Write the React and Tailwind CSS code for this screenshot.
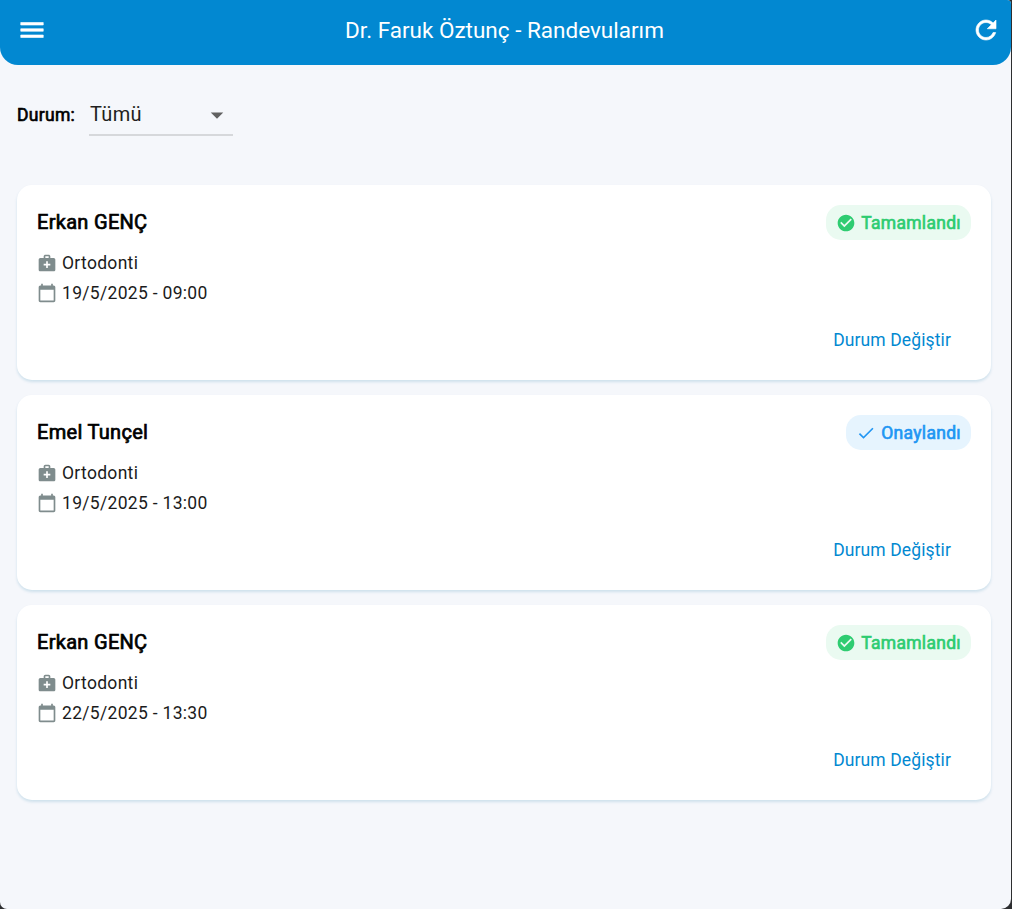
const icons = {
  menu: 'M3 18h18v-2H3v2zm0-5h18v-2H3v2zm0-7v2h18V6H3z',
  refresh:
    'M17.65 6.35C16.2 4.9 14.21 4 12 4c-4.42 0-7.99 3.58-7.99 8s3.57 8 7.99 8c3.73 0 6.84-2.55 7.73-6h-2.08c-.82 2.33-3.04 4-5.65 4-3.31 0-6-2.69-6-6s2.69-6 6-6c1.66 0 3.14.69 4.22 1.78L13 11h7V4l-2.35 2.35z',
  dropdown: 'M7 10l5 5 5-5z',
  medical:
    'M20 6h-4V4c0-1.1-.9-2-2-2h-4c-1.1 0-2 .9-2 2v2H4c-1.1 0-2 .9-2 2v12c0 1.1.9 2 2 2h16c1.1 0 2-.9 2-2V8c0-1.1-.9-2-2-2zM10 4h4v2h-4V4zm6 11h-3v3h-2v-3H8v-2h3v-3h2v3h3v2z',
  calendar:
    'M20 3h-1V1h-2v2H7V1H5v2H4c-1.1 0-2 .9-2 2v16c0 1.1.9 2 2 2h16c1.1 0 2-.9 2-2V5c0-1.1-.9-2-2-2zm0 18H4V8h16v13z',
  checkCircle:
    'M12 2C6.48 2 2 6.48 2 12s4.48 10 10 10 10-4.48 10-10S17.52 2 12 2zm-2 15l-5-5 1.41-1.41L10 14.17l7.59-7.59L19 8l-9 9z',
  check: 'M9 16.17L4.83 12l-1.42 1.41L9 19 21 7l-1.41-1.41z',
};

function Icon({ name, className }) {
  return (
    <svg viewBox="0 0 24 24" fill="currentColor" className={`shrink-0 ${className}`}>
      <path d={icons[name]} />
    </svg>
  );
}

const statuses = {
  done: { label: 'Tamamlandı', icon: 'checkCircle', style: 'bg-[#eafaf1] text-[#2ecc71]' },
  approved: { label: 'Onaylandı', icon: 'check', style: 'bg-[#e6f4fe] text-[#2196f3]' },
};

const appointments = [
  { name: 'Erkan GENÇ', date: '19/5/2025 - 09:00', status: 'done' },
  { name: 'Emel Tunçel', date: '19/5/2025 - 13:00', status: 'approved' },
  { name: 'Erkan GENÇ', date: '22/5/2025 - 13:30', status: 'done' },
];

function AppointmentCard({ name, date, status }) {
  const s = statuses[status];
  return (
    <article className="flex h-[195px] flex-col rounded-[15px] bg-white p-5 shadow-[0_2px_3px_rgba(2,110,160,0.16)]">
      <div className="flex h-[35px] items-center justify-between">
        <h2 className="pb-[2px] text-[20px] tracking-[0.3px] [-webkit-text-stroke:0.7px_currentColor]">{name}</h2>
        <span className={`flex h-[35px] items-center gap-[5px] rounded-[15px] px-[10px] ${s.style}`}>
          <Icon name={s.icon} className="size-5" />
          <span className="pt-[2px] text-[17.5px] tracking-[0.3px] [-webkit-text-stroke:0.65px_currentColor]">{s.label}</span>
        </span>
      </div>
      <div className="mt-[10px] flex flex-col gap-[5px] text-[17.5px] leading-[25px] tracking-[0.31px] text-[#1b1b1b]">
        <div className="flex h-[25px] items-center gap-[5px]">
          <Icon name="medical" className="size-5 text-[#7f8c8d]" />
          <span className="pt-[2px]">Ortodonti</span>
        </div>
        <div className="flex h-[25px] items-center gap-[5px]">
          <Icon name="calendar" className="size-5 text-[#7f8c8d]" />
          <span className="pt-[2px]">{date}</span>
        </div>
      </div>
      <button className="mt-[20px] mr-5 self-end text-[17.5px] leading-[30px] tracking-[0.12px] text-[#0288d1]">
        Durum Değiştir
      </button>
    </article>
  );
}

export default function App() {
  return (
    <div className="h-[909px] w-[1012px] overflow-hidden bg-[#2d2e30] pr-px font-['Roboto',sans-serif] whitespace-nowrap text-black">
      <div className="h-full overflow-hidden rounded-tr-[4px] rounded-br-[10px] rounded-bl-[7px] bg-[#f5f7fb]">
        <header className="flex h-[65px] items-center justify-between rounded-b-[18px] bg-[#0288d1] pr-[10px] pb-[5px] pl-[17px] text-white">
          <Icon name="menu" className="size-[30px] stroke-current stroke-[0.5]" />
          <h1 className="pt-[2px] pr-[9px] text-[22.5px]">Dr. Faruk Öztunç - Randevularım</h1>
          <Icon name="refresh" className="size-[30px] stroke-current stroke-[0.5]" />
        </header>
        <main className="pr-5 pl-[17px]">
          <div className="flex h-[100px] items-center">
            <span className="w-[72px] text-[17.5px] tracking-[0.3px] [-webkit-text-stroke:0.65px_currentColor]">Durum:</span>
            <div className="flex h-[42px] w-[144px] items-center justify-between border-b-2 border-[#d6d8db] pr-px pl-px text-[20px] tracking-[0.3px] text-[#1f1f20]">
              Tümü
              <Icon name="dropdown" className="mt-[2px] size-[30px] text-[#616161]" />
            </div>
          </div>
          <div className="mt-5 flex flex-col gap-[15px]">
            {appointments.map((a) => (
              <AppointmentCard key={a.date} {...a} />
            ))}
          </div>
        </main>
      </div>
    </div>
  );
}
